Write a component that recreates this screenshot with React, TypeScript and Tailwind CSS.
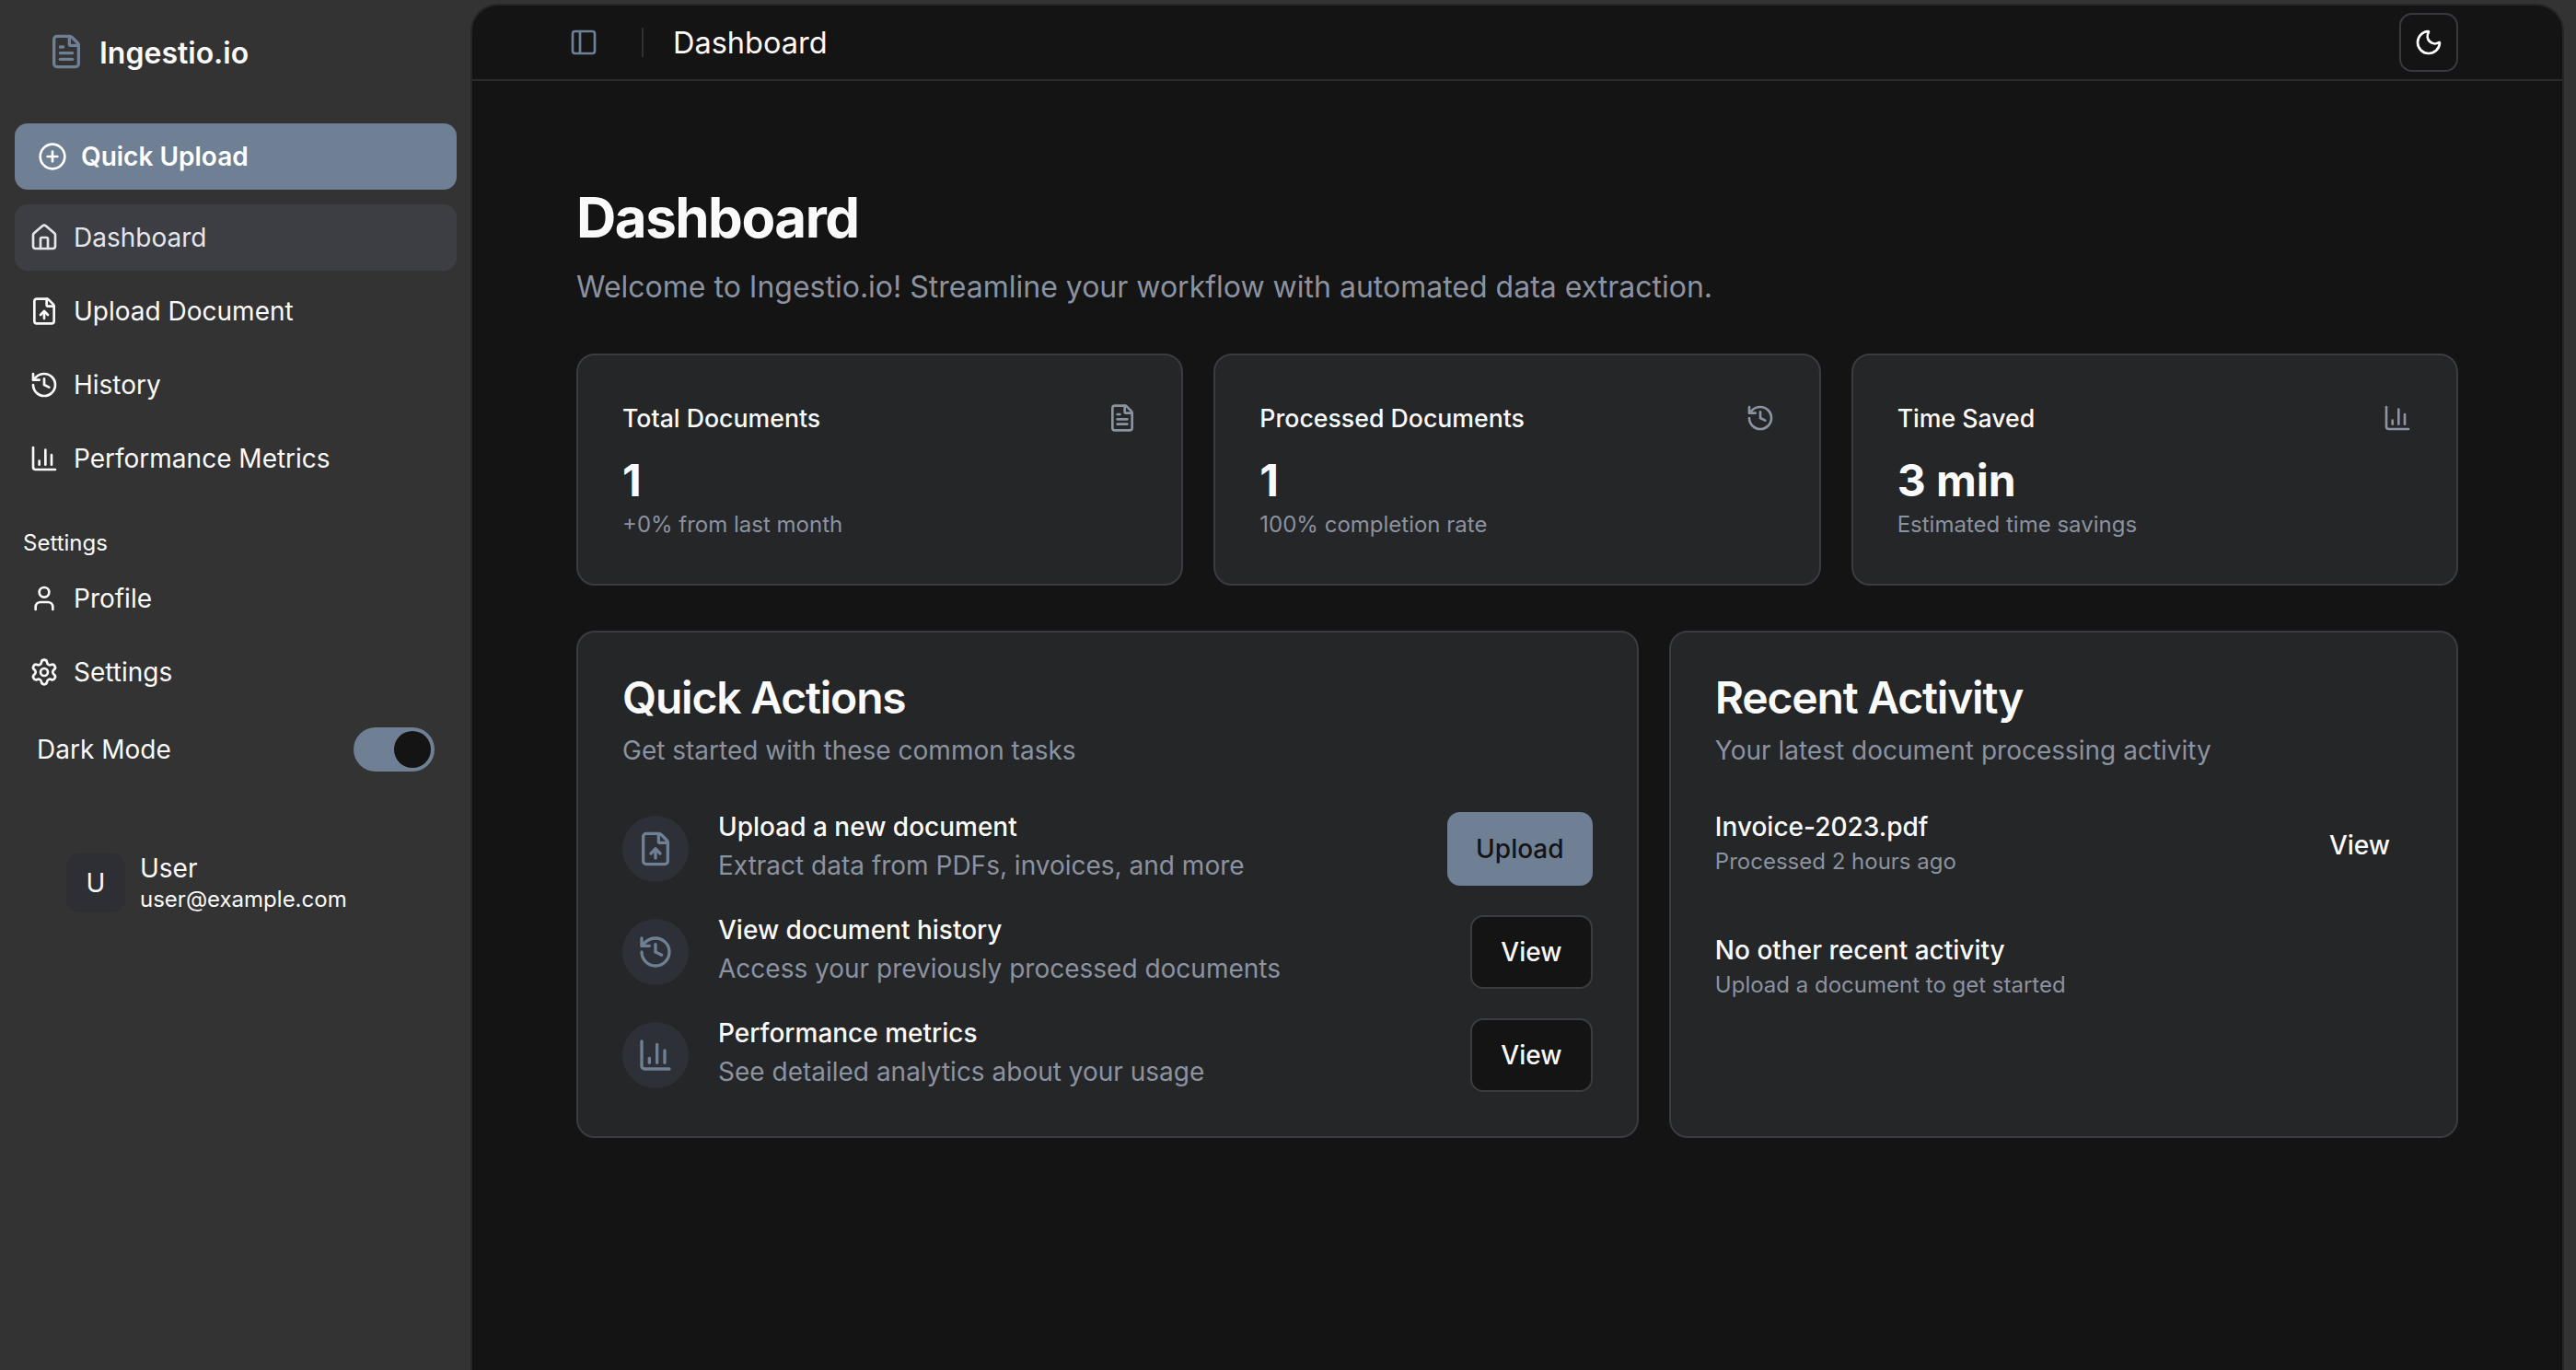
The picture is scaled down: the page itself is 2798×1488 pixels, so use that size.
import { ChartColumn, CirclePlus, FileText, FileUp, History, House, Moon, PanelLeft, Settings, User } from 'lucide-react';
import type { LucideIcon } from 'lucide-react';

const mainNav: { label: string; icon: LucideIcon; active?: boolean }[] = [
  { label: 'Dashboard', icon: House, active: true },
  { label: 'Upload Document', icon: FileUp },
  { label: 'History', icon: History },
  { label: 'Performance Metrics', icon: ChartColumn },
];

const settingsNav: { label: string; icon: LucideIcon }[] = [
  { label: 'Profile', icon: User },
  { label: 'Settings', icon: Settings },
];

const stats: { title: string; value: string; note: string; icon: LucideIcon }[] = [
  { title: 'Total Documents', value: '1', note: '+0% from last month', icon: FileText },
  { title: 'Processed Documents', value: '1', note: '100% completion rate', icon: History },
  { title: 'Time Saved', value: '3 min', note: 'Estimated time savings', icon: ChartColumn },
];

const actions: { title: string; note: string; icon: LucideIcon; button: string; primary?: boolean }[] = [
  { title: 'Upload a new document', note: 'Extract data from PDFs, invoices, and more', icon: FileUp, button: 'Upload', primary: true },
  { title: 'View document history', note: 'Access your previously processed documents', icon: History, button: 'View' },
  { title: 'Performance metrics', note: 'See detailed analytics about your usage', icon: ChartColumn, button: 'View' },
];

function Sidebar() {
  return (
    <aside className="w-[513px] shrink-0 bg-[#333333] pl-4 pr-[17px] text-[#fafafa]">
      <div className="flex h-[134px] items-start pl-[36px] pt-[36px]">
        <FileText className="h-[40px] w-[40px] text-[#6f7f94]" strokeWidth={2} />
        <span className="ml-[16px] text-[32px] leading-[44px] font-semibold">Ingestio.io</span>
      </div>

      <button className="flex h-[72px] w-[480px] items-center gap-[15px] rounded-[14px] bg-[#6f7f94] pl-[25px] text-[28px] font-semibold text-white">
        <CirclePlus className="h-[32px] w-[32px]" strokeWidth={2} />
        Quick Upload
      </button>

      <nav className="mt-[16px] flex flex-col gap-[8px]">
        {mainNav.map((item) => (
          <a
            key={item.label}
            className={`flex h-[72px] items-center gap-[16px] rounded-[14px] pl-[16px] text-[28px] ${
              item.active ? 'bg-[#3d3e44] text-[#e4e6ea]' : 'text-[#fafafa]'
            }`}
          >
            <item.icon className="h-[32px] w-[32px]" strokeWidth={2} />
            {item.label}
          </a>
        ))}
      </nav>

      <div className="mt-[38px] pl-[9px] text-[24px] leading-[36px]">Settings</div>
      <nav className="mt-[6px] flex flex-col gap-[8px]">
        {settingsNav.map((item) => (
          <a key={item.label} className="flex h-[72px] items-center gap-[16px] pl-[16px] text-[28px]">
            <item.icon className="h-[32px] w-[32px]" strokeWidth={2} />
            {item.label}
          </a>
        ))}
      </nav>

      <div className="mt-[12px] flex h-[72px] items-center justify-between pl-[24px] pr-[24px] text-[28px]">
        <span>Dark Mode</span>
        <div className="flex h-[48px] w-[88px] items-center justify-end rounded-full bg-[#6f7f94] pr-[4px]">
          <div className="h-[40px] w-[40px] rounded-full bg-[#141414]" />
        </div>
      </div>

      <div className="mt-[75px] flex items-center gap-[16px] pl-[56px]">
        <div className="flex h-[64px] w-[64px] items-center justify-center rounded-[14px] bg-[#2e2f35] text-[28px]">U</div>
        <div>
          <div className="text-[28px] leading-[36px]">User</div>
          <div className="text-[24px] leading-[32px]">user@example.com</div>
        </div>
      </div>
    </aside>
  );
}

function Header() {
  return (
    <header className="flex h-[82px] items-center border-b-2 border-[#2a2b2f] pl-[105px] pr-[113px]">
      <PanelLeft className="h-[32px] w-[32px] text-[#6f7f94]" strokeWidth={2} />
      <div className="ml-[47px] h-[32px] w-[2px] bg-[#2e3035]" />
      <span className="ml-[32px] pt-[2px] text-[32.5px] text-[#fafafa]">Dashboard</span>
      <button className="ml-auto flex h-[64px] w-[64px] items-center justify-center rounded-[14px] border-2 border-[#383a40] text-white">
        <Moon className="h-[32px] w-[32px]" strokeWidth={2} />
      </button>
    </header>
  );
}

function StatCard({ title, value, note, icon: Icon }: (typeof stats)[number]) {
  return (
    <div className="h-[252px] rounded-[20px] border-2 border-[#3a3c41] bg-[#252628] px-[48px] pt-[48px]">
      <div className="flex items-center justify-between">
        <span className="text-[26.7px] leading-[40px] font-medium text-[#fafafa]">{title}</span>
        <Icon className="h-[32px] w-[32px] text-[#8b92a0]" strokeWidth={2} />
      </div>
      <div className="mt-[20px] text-[48px] leading-[56px] font-bold text-[#fafafa]">{value}</div>
      <div className="mt-[2px] text-[24px] leading-[36px] text-[#8b92a0]">{note}</div>
    </div>
  );
}

function QuickActions() {
  return (
    <div className="col-span-4 h-[551px] rounded-[20px] border-2 border-[#3a3c41] bg-[#252628] px-[48px] pt-[43px]">
      <h2 className="text-[48px] leading-[56px] font-semibold tracking-tight text-[#fafafa]">Quick Actions</h2>
      <p className="mt-[9px] text-[28px] leading-[40px] text-[#8b92a0]">Get started with these common tasks</p>
      <div className="mt-[45px] flex flex-col gap-[28px]">
        {actions.map((a) => (
          <div key={a.title} className="flex h-[84px] items-center">
            <div className="flex h-[72px] w-[72px] items-center justify-center rounded-full bg-[#2d3036] text-[#6f7f94]">
              <a.icon className="h-[40px] w-[40px]" strokeWidth={2} />
            </div>
            <div className="ml-[32px]">
              <div className="text-[28px] leading-[36px] font-medium text-[#fafafa]">{a.title}</div>
              <div className="text-[28px] leading-[48px] text-[#8b92a0]">{a.note}</div>
            </div>
            {a.primary ? (
              <button className="ml-auto h-[80px] w-[158px] rounded-[14px] bg-[#6f7f94] text-[28px] font-medium text-[#141414]">{a.button}</button>
            ) : (
              <button className="ml-auto h-[80px] w-[133px] rounded-[14px] border-2 border-[#3a3c41] bg-[#141414] text-[28px] font-medium text-[#fafafa]">{a.button}</button>
            )}
          </div>
        ))}
      </div>
    </div>
  );
}

function RecentActivity() {
  return (
    <div className="col-span-3 h-[551px] rounded-[20px] border-2 border-[#3a3c41] bg-[#252628] px-[48px] pt-[43px]">
      <h2 className="text-[48px] leading-[56px] font-semibold tracking-tight text-[#fafafa]">Recent Activity</h2>
      <p className="mt-[9px] text-[28px] leading-[40px] text-[#8b92a0]">Your latest document processing activity</p>
      <div className="mt-[43px] flex items-start justify-between">
        <div>
          <div className="text-[28px] leading-[40px] font-medium text-[#fafafa]">Invoice-2023.pdf</div>
          <div className="text-[24px] leading-[36px] text-[#8b92a0]">Processed 2 hours ago</div>
        </div>
        <button className="h-[80px] w-[114px] text-[28px] font-medium text-[#fafafa]">View</button>
      </div>
      <div className="mt-[54px] text-[28px] leading-[40px] font-medium text-[#fafafa]">No other recent activity</div>
      <div className="text-[24px] leading-[36px] text-[#8b92a0]">Upload a document to get started</div>
    </div>
  );
}

export default function App() {
  return (
    <div className="flex h-[1488px] overflow-hidden bg-[#333333] font-['Inter',sans-serif]">
      <Sidebar />
      <div className="mr-[15px] mt-[6px] flex-1 rounded-t-[28px] bg-[#141414] shadow-[0_0_0_2px_#262626]">
        <Header />
        <main className="px-[113px] pt-[112px]">
          <h1 className="text-[60px] leading-[72px] font-bold tracking-tight text-[#fafafa]">Dashboard</h1>
          <p className="mt-[16px] text-[32px] leading-[48px] text-[#8b92a0]">
            Welcome to Ingestio.io! Streamline your workflow with automated data extraction.
          </p>
          <div className="mt-[48px] grid grid-cols-3 gap-[33px]">
            {stats.map((s) => (
              <StatCard key={s.title} {...s} />
            ))}
          </div>
          <div className="mt-[49px] grid grid-cols-7 gap-[33px]">
            <QuickActions />
            <RecentActivity />
          </div>
        </main>
      </div>
    </div>
  );
}
